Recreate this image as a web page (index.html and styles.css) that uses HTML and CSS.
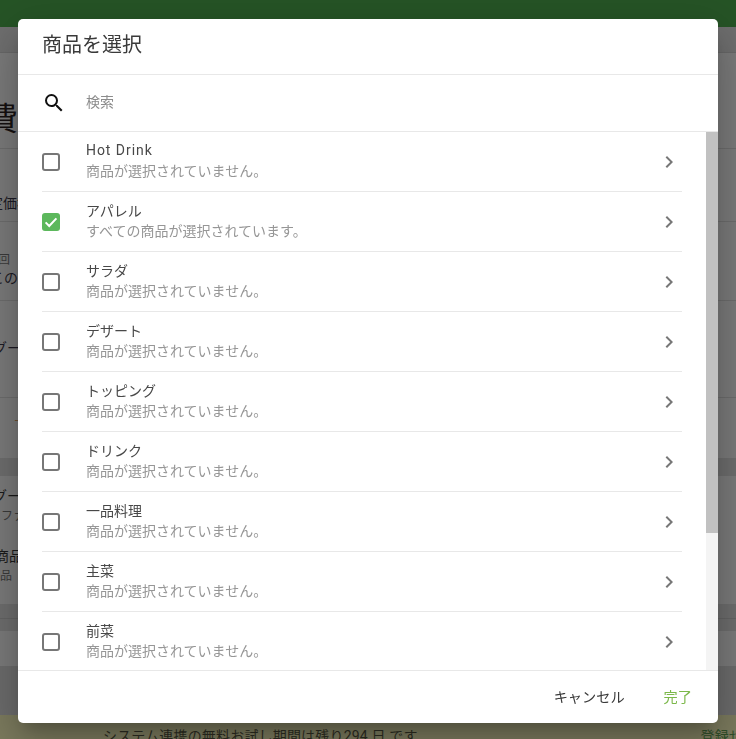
FILE: index.html
```html
<!DOCTYPE html>
<html lang="ja">
<head>
<meta charset="utf-8">
<title>商品を選択</title>
<link rel="stylesheet" href="styles.css">
</head>
<body>
<div class="page">
  <div class="topbar"></div>
  <div class="bg-strip"></div>
  <div class="bg-head"><span class="bg-title">費</span></div>
  <div class="bg-row bg-price">定価格</div>
  <div class="bg-row bg-once"><span class="bg-small">回</span><span class="bg-this">この</span></div>
  <div class="bg-row bg-group">グー</div>
  <div class="bg-row bg-mark"><span class="bg-dash">ー</span></div>
  <div class="bg-gap"></div>
  <div class="bg-card">
    <div class="bg-card-a"><span class="bg-gu">グー</span><span class="bg-small bg-fa">ファ</span></div>
    <div class="bg-card-b"><span class="bg-goods">商品</span><span class="bg-small bg-item">品</span></div>
  </div>
  <div class="bg-gap bg-gap-line"></div>
  <div class="bg-band"></div>
  <div class="bg-foot"></div>
  <div class="notice">
    <span>システム連携の無料お試し期間は残り294 日 です</span>
    <span class="notice-link">登録せ</span>
  </div>
</div>

<div class="dialog">
  <div class="dialog-title">商品を選択</div>
  <div class="search">
    <svg class="search-icon" viewBox="0 0 24 24" width="24" height="24"><path d="M15.5 14h-.79l-.28-.27A6.471 6.471 0 0 0 16 9.5 6.5 6.5 0 1 0 9.5 16c1.61 0 3.09-.59 4.23-1.57l.27.28v.79l5 4.99L20.49 19l-4.99-5zm-6 0C7.01 14 5 11.99 5 9.5S7.01 5 9.5 5 14 7.01 14 9.5 11.99 14 9.5 14z"/></svg>
    <span class="search-text">検索</span>
  </div>
  <div class="list-wrap">
    <div class="list">
      <div class="item">
        <span class="check"></span>
        <div class="item-text"><div class="item-name latin">Hot Drink</div><div class="item-sub">商品が選択されていません。</div></div>
        <svg class="chev" viewBox="0 0 24 24" width="24" height="24"><path d="M10 6 8.59 7.41 13.17 12l-4.58 4.59L10 18l6-6z"/></svg>
      </div>
      <div class="item">
        <span class="check on"><svg viewBox="0 0 18 18" width="18" height="18"><path d="M3.6 9.4 7.2 13l7.2-7.6" fill="none" stroke="#fff" stroke-width="2"/></svg></span>
        <div class="item-text"><div class="item-name">アパレル</div><div class="item-sub">すべての商品が選択されています。</div></div>
        <svg class="chev" viewBox="0 0 24 24" width="24" height="24"><path d="M10 6 8.59 7.41 13.17 12l-4.58 4.59L10 18l6-6z"/></svg>
      </div>
      <div class="item">
        <span class="check"></span>
        <div class="item-text"><div class="item-name">サラダ</div><div class="item-sub">商品が選択されていません。</div></div>
        <svg class="chev" viewBox="0 0 24 24" width="24" height="24"><path d="M10 6 8.59 7.41 13.17 12l-4.58 4.59L10 18l6-6z"/></svg>
      </div>
      <div class="item">
        <span class="check"></span>
        <div class="item-text"><div class="item-name">デザート</div><div class="item-sub">商品が選択されていません。</div></div>
        <svg class="chev" viewBox="0 0 24 24" width="24" height="24"><path d="M10 6 8.59 7.41 13.17 12l-4.58 4.59L10 18l6-6z"/></svg>
      </div>
      <div class="item">
        <span class="check"></span>
        <div class="item-text"><div class="item-name">トッピング</div><div class="item-sub">商品が選択されていません。</div></div>
        <svg class="chev" viewBox="0 0 24 24" width="24" height="24"><path d="M10 6 8.59 7.41 13.17 12l-4.58 4.59L10 18l6-6z"/></svg>
      </div>
      <div class="item">
        <span class="check"></span>
        <div class="item-text"><div class="item-name">ドリンク</div><div class="item-sub">商品が選択されていません。</div></div>
        <svg class="chev" viewBox="0 0 24 24" width="24" height="24"><path d="M10 6 8.59 7.41 13.17 12l-4.58 4.59L10 18l6-6z"/></svg>
      </div>
      <div class="item">
        <span class="check"></span>
        <div class="item-text"><div class="item-name">一品料理</div><div class="item-sub">商品が選択されていません。</div></div>
        <svg class="chev" viewBox="0 0 24 24" width="24" height="24"><path d="M10 6 8.59 7.41 13.17 12l-4.58 4.59L10 18l6-6z"/></svg>
      </div>
      <div class="item">
        <span class="check"></span>
        <div class="item-text"><div class="item-name">主菜</div><div class="item-sub">商品が選択されていません。</div></div>
        <svg class="chev" viewBox="0 0 24 24" width="24" height="24"><path d="M10 6 8.59 7.41 13.17 12l-4.58 4.59L10 18l6-6z"/></svg>
      </div>
      <div class="item">
        <span class="check"></span>
        <div class="item-text"><div class="item-name">前菜</div><div class="item-sub">商品が選択されていません。</div></div>
        <svg class="chev" viewBox="0 0 24 24" width="24" height="24"><path d="M10 6 8.59 7.41 13.17 12l-4.58 4.59L10 18l6-6z"/></svg>
      </div>
    </div>
    <div class="scrollbar"><div class="thumb"></div></div>
  </div>
  <div class="actions">
    <span class="btn">キャンセル</span>
    <span class="btn done">完了</span>
  </div>
</div>
</body>
</html>
```
FILE: styles.css
```css
* { box-sizing: border-box; }
html, body { margin: 0; height: 100%; overflow: hidden; }
body {
  font-family: Roboto, "Noto Sans CJK JP", sans-serif;
  background: #7b7b7b;
  color: #1a1a1a;
}
.page {
  height: 739px;
  display: flex;
  flex-direction: column;
  font-size: 14px;
  overflow: hidden;
}
.topbar { height: 27px; flex: none; background: #265426; }
.bg-strip { height: 26px; flex: none; background: #6f6f6f; border-bottom: 1px solid #686868; }
.bg-head { height: 96px; flex: none; border-bottom: 1px solid #6d6d6d; }
.bg-title { display: block; font-size: 32px; line-height: 40px; padding-top: 46px; margin-left: -14px; color: #151010; }
.bg-row { flex: none; border-bottom: 1px solid #6d6d6d; color: #1c1a24; }
.bg-price { height: 73px; padding-top: 44px; margin-left: -11px; line-height: 20px; }
.bg-once { height: 79px; margin-left: -2px; display: flex; flex-direction: column; padding-top: 30px; line-height: 20px; }
.bg-this { margin-left: -8px; }
.bg-small { font-size: 12px; color: #3a3a3a; line-height: 16px; }
.bg-group { height: 97px; padding-top: 37px; margin-left: -7px; line-height: 20px; }
.bg-mark { height: 60px; padding: 14px 0 0 14px; color: #6a4a2a; border-bottom: 0; }
.bg-dash { font-size: 10px; }
.bg-gap { flex: none; height: 18px; background: #6e6e6e; }
.bg-gap-line { height: 27px; padding-top: 14px; }
.bg-gap-line::before { content: ""; display: block; height: 1px; background: #646464; }
.bg-card {
  flex: none;
  height: 128px;
  padding-top: 10px;
  display: flex;
  flex-direction: column;
}
.bg-card-a, .bg-card-b { display: flex; flex-direction: column; line-height: 20px; }
.bg-gu { margin-left: -7px; }
.bg-card-b { margin-top: 20px; }
.bg-goods { margin-left: -5px; }
.bg-fa { margin-left: 1px; line-height: 20px; }
.bg-item { line-height: 20px; }
.bg-band { flex: none; height: 35px; }
.bg-foot { flex: none; height: 49px; background: #6c6c6c; }
.notice {
  flex: none;
  height: 25px;
  background: #7c7b5e;
  display: flex;
  justify-content: space-between;
  padding: 11px 0 0 103px;
  line-height: 20px;
  color: #2d2d22;
  letter-spacing: .18px;
}
.notice-link { color: #2f4f2a; margin-right: -7px; }
.dialog {
  position: fixed;
  left: 18px;
  top: 19px;
  width: 700px;
  height: 704px;
  background: #fff;
  border-radius: 5px;
  display: flex;
  flex-direction: column;
  overflow: hidden;
  box-shadow: 0 11px 15px -7px rgba(0,0,0,.2), 0 24px 38px 3px rgba(0,0,0,.14), 0 9px 46px 8px rgba(0,0,0,.12);
}
.dialog-title {
  flex: none;
  height: 56px;
  padding: 12px 0 0 24px;
  font-size: 20px;
  line-height: 28px;
  color: #3a3a3a;
  border-bottom: 1px solid #e8e8e8;
}
.search {
  flex: none;
  height: 57px;
  display: flex;
  align-items: center;
  padding-left: 24px;
  border-bottom: 1px solid #e8e8e8;
}
.search-icon { flex: none; width: 24px; height: 24px; fill: #111; }
.search-text { margin-left: 20px; margin-top: -4px; font-size: 14px; color: #8c8c8c; }
.list-wrap {
  flex: 1;
  min-height: 0;
  display: flex;
}
.list {
  flex: 1;
  min-width: 0;
  overflow: hidden;
}
.scrollbar { flex: none; width: 12px; background: #f4f4f4; }
.thumb { height: 401px; background: #c1c1c1; }
.item {
  height: 60px;
  margin: 0 24px;
  display: flex;
  align-items: center;
  border-bottom: 1px solid #e8e8e8;
}
.check {
  flex: none;
  width: 18px;
  height: 18px;
  border: 2px solid #777;
  border-radius: 3px;
}
.check.on { border: 0; background: #5cb85c; }
.check svg { display: block; }
.item-text { flex: 1; min-width: 0; margin-left: 26px; padding-bottom: 2px; }
.item-name { font-size: 14px; line-height: 20px; color: #484848; }
.item-name.latin { letter-spacing: .95px; margin-top: -1px; margin-bottom: 1px; }
.item-sub { font-size: 14px; line-height: 20px; color: #969696; }
.chev { flex: none; fill: #777; margin-right: 1px; }
.actions {
  flex: none;
  height: 53px;
  display: flex;
  justify-content: flex-end;
  align-items: center;
  gap: 39px;
  padding: 0 26px 3px 0;
  border-top: 1px solid #e8e8e8;
  font-size: 14.2px;
}
.btn { color: #3a3a3a; }
.btn.done { color: #7cb84a; }
```
